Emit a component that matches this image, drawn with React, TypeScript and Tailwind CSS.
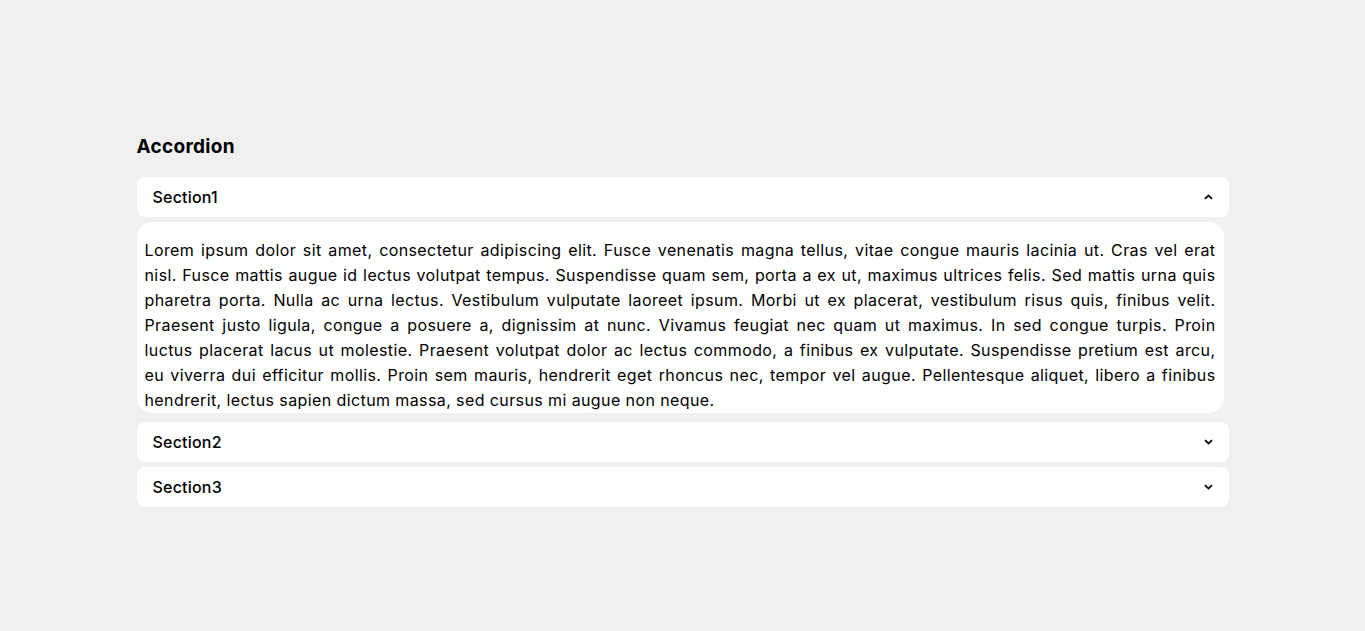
const lines = [
    'Lorem ipsum dolor sit amet, consectetur adipiscing elit. Fusce venenatis magna tellus, vitae congue mauris lacinia ut. Cras vel erat',
    'nisl. Fusce mattis augue id lectus volutpat tempus. Suspendisse quam sem, porta a ex ut, maximus ultrices felis. Sed mattis urna quis',
    'pharetra porta. Nulla ac urna lectus. Vestibulum vulputate laoreet ipsum. Morbi ut ex placerat, vestibulum risus quis, finibus velit.',
    'Praesent justo ligula, congue a posuere a, dignissim at nunc. Vivamus feugiat nec quam ut maximus. In sed congue turpis. Proin',
    'luctus placerat lacus ut molestie. Praesent volutpat dolor ac lectus commodo, a finibus ex vulputate. Suspendisse pretium est arcu,',
    'eu viverra dui efficitur mollis. Proin sem mauris, hendrerit eget rhoncus nec, tempor vel augue. Pellentesque aliquet, libero a finibus',
    'hendrerit, lectus sapien dictum massa, sed cursus mi augue non neque.',
];

function Chevron({ up }: { up: boolean }) {
    return (
        <svg width="9" height="6" viewBox="0 0 9 6" className={up ? 'rotate-180' : ''}>
            <path d="M1 1.2 L4.5 4.6 L8 1.2" fill="none" stroke="#000" strokeWidth="1.8" />
        </svg>
    );
}

function Header({ title, open }: { title: string; open: boolean }) {
    return (
        <div className="h-[40px] bg-white rounded-lg flex items-center justify-between pl-[16px] pr-[16px]">
            <span className="text-[16px] font-medium tracking-[0.2px] text-black">{title}</span>
            <Chevron up={open} />
        </div>
    );
}

export default function App() {
    return (
        <div
            className="min-h-screen bg-[#f0f0f0] pt-[133px]"
            style={{ fontFamily: 'Inter, "Open Sans", sans-serif' }}
        >
            <div className="w-4/5 mx-auto">
                <h2 className="text-[19px] leading-[27px] font-bold tracking-[0.3px] text-black mb-[17px]">
                    Accordion
                </h2>
                <div className="mb-[5px]">
                    <Header title="Section1" open={true} />
                </div>
                <div className="w-[1087px] bg-white rounded-[15px] px-2 pt-[16px] pb-0 mb-[9px] text-[16px] leading-[25px] tracking-[0.4px] text-black">
                    {lines.map((line, i) => (
                        <div
                            key={i}
                            className={
                                i < lines.length - 1
                                    ? 'text-justify [text-align-last:justify] whitespace-nowrap'
                                    : 'text-left whitespace-nowrap'
                            }
                        >
                            {line}
                        </div>
                    ))}
                </div>
                <div className="mb-[5px]">
                    <Header title="Section2" open={false} />
                </div>
                <Header title="Section3" open={false} />
            </div>
        </div>
    );
}
